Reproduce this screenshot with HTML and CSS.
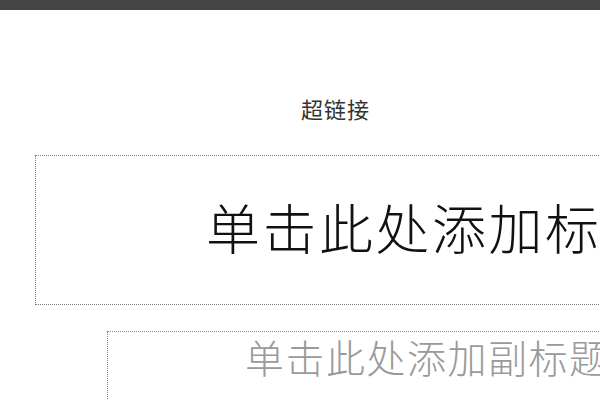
FILE: index.html
```html
<!DOCTYPE html>
<html lang="zh">
<head>
<meta charset="utf-8">
<link rel="stylesheet" href="styles.css">
</head>
<body>
<div class="topbar"></div>
<div class="caption">超链接</div>
<div class="title-box"><span class="title">单击此处添加标题</span></div>
<div class="sub-box"><span class="subtitle">单击此处添加副标题</span></div>
</body>
</html>
```
FILE: styles.css
```css
html, body {
  margin: 0;
  padding: 0;
  width: 600px;
  height: 400px;
  overflow: hidden;
  background: #ffffff;
  font-family: "Noto Sans CJK SC", "Noto Sans", sans-serif;
}
.topbar {
  height: 10px;
  background: #454545;
}
.caption {
  margin-top: 83px;
  padding-left: 301px;
  font-size: 22px;
  line-height: 30px;
  color: #333333;
  white-space: nowrap;
  letter-spacing: 1px;
}
.title-box {
  margin-top: 32px;
  margin-left: 35px;
  width: 700px;
  height: 150px;
  border: 1px dotted #7a7a7a;
  display: flex;
  align-items: center;
  padding-left: 170px;
  padding-bottom: 6px;
  box-sizing: border-box;
}
.title {
  font-size: 54px;
  font-weight: 300;
  line-height: 1;
  color: #111111;
  white-space: nowrap;
  letter-spacing: 2.5px;
}
.sub-box {
  margin-top: 26px;
  margin-left: 107px;
  width: 700px;
  height: 120px;
  border: 1px dotted #8a8a8a;
  padding-left: 137px;
  padding-top: 5px;
  box-sizing: border-box;
}
.subtitle {
  font-size: 39px;
  font-weight: 300;
  line-height: 1;
  color: #9a9a9a;
  white-space: nowrap;
  letter-spacing: 1.5px;
}
```
